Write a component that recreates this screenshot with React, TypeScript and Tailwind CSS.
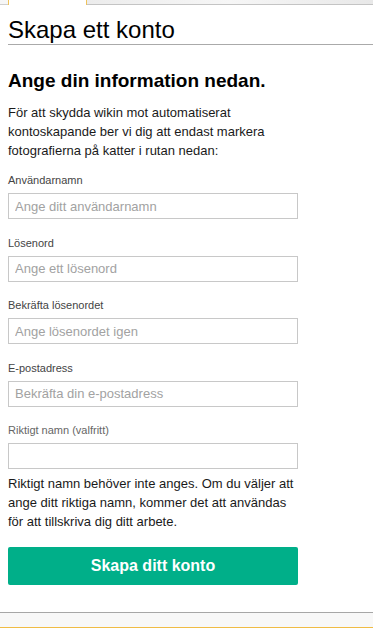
import React from "react";

const fields = [
  { label: "Användarnamn", placeholder: "Ange ditt användarnamn", cls: "text-[#444]" },
  { label: "Lösenord", placeholder: "Ange ett lösenord", cls: "text-[#444]" },
  { label: "Bekräfta lösenordet", placeholder: "Ange lösenordet igen", cls: "text-[#444]" },
  { label: "E-postadress", placeholder: "Bekräfta din e-postadress", cls: "text-[#444]" },
  { label: "Riktigt namn (valfritt)", placeholder: "", cls: "text-[#666]" },
];

export default function App() {
  return (
    <div
      className="w-[373px] h-[631px] overflow-hidden bg-white flex flex-col"
      style={{ fontFamily: '"Liberation Sans", Arial, sans-serif' }}
    >
      {/* top tab strip */}
      <div className="flex h-[5px] shrink-0">
        <div className="w-[8px] bg-[#f6f6f6] border-b border-[#cfcfcf]" />
        <div className="w-[79px] bg-white border-l border-r border-[#f0c35a]" />
        <div className="flex-1 bg-gradient-to-r from-[#ececec] via-[#f6f6f6] to-[#e8e8e8] border-b border-[#c4c4c4]" />
      </div>

      <div className="pl-[8px] flex-1 flex flex-col">
        <h1 className="mt-[11px] text-[24px] leading-[28px] text-black border-b border-[#aaaaaa] font-normal">
          Skapa ett konto
        </h1>

        <div className="w-[294px]">
          <h2 className="mt-[24px] text-[19px] leading-[24px] font-bold text-black">
            Ange din information nedan.
          </h2>
          <p className="mt-[10px] text-[13px] leading-[19px] text-[#1a1a1a]">
            För att skydda wikin mot automatiserat kontoskapande ber vi dig att endast markera
            fotografierna på katter i rutan nedan:
          </p>

          <div className="mt-[12.3px] flex flex-col gap-[15.5px]">
            {fields.map((f) => (
              <div key={f.label} className="flex flex-col">
                <label className={`text-[11px] leading-[16px] ${f.cls}`}>{f.label}</label>
                <input
                  className="mt-[5px] w-[290px] h-[26px] border border-[#c8c8c8] px-[6px] text-[13px] text-[#222] placeholder:text-[#a2a2a2] outline-none bg-white"
                  style={{ fontFamily: '"Liberation Sans", Arial, sans-serif' }}
                  placeholder={f.placeholder}
                />
              </div>
            ))}
          </div>

          <p className="mt-[4.6px] text-[13px] leading-[19px] text-[#1a1a1a]">
            Riktigt namn behöver inte anges. Om du väljer att ange ditt riktiga namn, kommer det
            att användas för att tillskriva dig ditt arbete.
          </p>

          <button
            className="mt-[15.7px] w-[290px] h-[38px] rounded-[2px] bg-[#00af89] text-white text-[16px] leading-[38px] font-bold"
            style={{ fontFamily: '"Liberation Sans", Arial, sans-serif' }}
          >
            Skapa ditt konto
          </button>
        </div>
      </div>

      {/* footer */}
      <div className="shrink-0 h-[19px] flex flex-col">
        <div className="h-[15px] bg-[#f8f8f8] border-t border-[#a7a7a7]" />
        <div className="h-[1px] bg-[#f0bc45]" />
        <div className="h-[3px] bg-white" />
      </div>
    </div>
  );
}
